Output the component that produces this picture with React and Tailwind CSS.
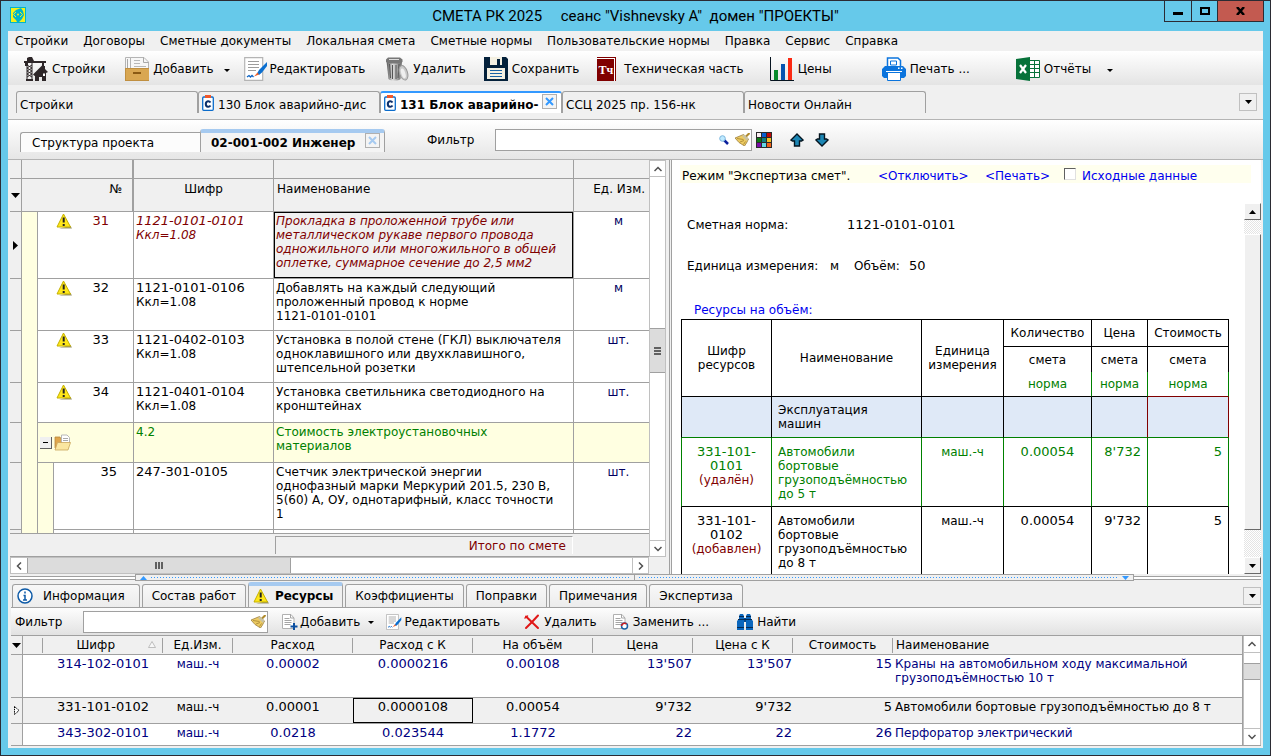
import React from 'react';

const menuItems = [
  'Стройки', 'Договоры', 'Сметные документы', 'Локальная смета', 'Сметные нормы',
  'Пользовательские нормы', 'Правка', 'Сервис', 'Справка',
];

const estimateRows = [
  { no: '31', code: '1121-0101-0101', k: 'Ккл=1.08', name: 'Прокладка в проложенной трубе или металлическом рукаве первого провода одножильного или многожильного в общей оплетке, суммарное сечение до 2,5 мм2', unit: 'м', height: 'h-[67px]', current: true },
  { no: '32', code: '1121-0101-0106', k: 'Ккл=1.08', name: 'Добавлять на каждый следующий проложенный провод к норме\n1121-0101-0101', unit: 'м', height: 'h-[52px]' },
  { no: '33', code: '1121-0402-0103', k: 'Ккл=1.08', name: 'Установка в полой стене (ГКЛ) выключателя одноклавишного или двухклавишного, штепсельной розетки', unit: 'шт.', height: 'h-[52px]' },
  { no: '34', code: '1121-0401-0104', k: 'Ккл=1.08', name: 'Установка светильника светодиодного на кронштейнах', unit: 'шт.', height: 'h-[40px]' },
];

const normRows = [
  { code: '331-101-0101', state: '(удалён)', name: 'Автомобили бортовые грузоподъёмностью до 5 т', unit: 'маш.-ч', amount: '0.00054', price: "8'732", cost: '5', tone: 'border-x-[#008000] text-[#008000]' },
  { code: '331-101-0102', state: '(добавлен)', name: 'Автомобили бортовые грузоподъёмностью до 8 т', unit: 'маш.-ч', amount: '0.00054', price: "9'732", cost: '5', tone: 'border-x-black text-black' },
];

const resourceRows = [
  { code: '314-102-0101', unit: 'маш.-ч', rate: '0.00002', rateK: '0.0000216', volume: '0.00108', price: "13'507", priceK: "13'507", cost: '15', name: 'Краны на автомобильном ходу максимальной\nгрузоподъёмностью 10 т', height: 'h-[43px]' },
  { code: '331-101-0102', unit: 'маш.-ч', rate: '0.00001', rateK: '0.0000108', volume: '0.00054', price: "9'732", priceK: "9'732", cost: '5', name: 'Автомобили бортовые грузоподъёмностью до 8 т', height: 'h-[26px]', current: true },
  { code: '343-302-0101', unit: 'маш.-ч', rate: '0.0218', rateK: '0.023544', volume: '1.1772', price: '22', priceK: '22', cost: '26', name: 'Перфоратор электрический', height: 'h-[21px]' },
];

/* icons */

const AppIcon = () => (
  <svg width="16" height="16" viewBox="0 0 16 16">
    <rect width="16" height="16" fill="#00b4cc" />
    <path d="M1 1h10L6 3 3 6v4l3 3 1 2H1z" fill="#f4f01a" />
    <path d="M15 15H9l3-3 2-4-1-4-2-3h4z" fill="#f4f01a" />
    <path d="M6 5 3.500 7.500 6 10M10 5l2.500 2.500L10 10" fill="none" stroke="#f4f01a" />
    <circle cx="8" cy="7.500" r="1" fill="#f4f01a" />
  </svg>
);

const CraneIcon = () => (
  <svg width="24" height="24" viewBox="0 0 24 24" fill="#2d2628">
    <path d="M0 4h22v2H0zM3 1l2-1h3l2 4H3zM18 6h2v3h-2zM1 6h3v3H1z" />
    <path d="M3 5v18M8 5v18M3 8l5 3-5 3 5 3-5 3M8 8l-5 3 5 3-5 3 5 3" fill="none" stroke="#2d2628" />
    <path d="M2 22h7v2H2zM18 8.500l-9 9 1.500 1.500.5-.5V24h4v-4h3v4h4v-8l2-1-3-3V9h-2z" />
    <path d="M19 16.500h2V19h-2z" fill="#fff" />
  </svg>
);

const DrawerIcon = () => (
  <svg width="24" height="24" viewBox="0 0 24 24">
    <path d="M.5 12V.5h5V12M5.500 12V.5H19L23.500 5v7" fill="#f7f7f7" stroke="#b4b4b4" />
    <path d="M2.500 2v9M18.500.5v5h5" fill="none" stroke="#a8a8a8" />
    <path d="M9 3.500h6M9 6.500h6M9 9.500h12" stroke="#b8b8b8" />
    <rect y="11" width="24" height="13" fill="#d9a752" />
    <path d="M0 11.500h24M.5 11v13M0 23.500h24" stroke="#c08f40" fill="none" />
    <rect x="8" y="15" width="8" height="2" fill="#8a5a14" />
  </svg>
);

const EditIcon = ({ size = 24 }) => (
  <svg width={size} height={size} viewBox="0 0 24 24">
    <path d="M.7.700h18v22.600H.7z" fill="#fff" stroke="#b4b4b4" strokeWidth="1.200" />
    <path d="M4 4.500h11M4 7.500h11M4 10.500h11M4 13.500h8" stroke="#9c9c9c" strokeWidth="1.200" />
    <path d="m3 20 2-1.500L6.500 20 8 18.500 9.500 20" fill="none" stroke="#0b63c4" strokeWidth="1.300" />
    <path d="m23 5-8 8-2 3.500 2 1.500 3-2.500L23 9z" fill="#0b6fd0" />
    <path d="m13.500 15.500-3.500 4 5-2z" fill="#f0602a" />
  </svg>
);

const BinIcon = () => (
  <svg width="24" height="24" viewBox="0 0 24 24">
    <defs>
      <linearGradient id="bin" x1="0" x2="1">
        <stop offset="0" stopColor="#555" />
        <stop offset=".4" stopColor="#ddd" />
        <stop offset="1" stopColor="#666" />
      </linearGradient>
    </defs>
    <path d="M1.500 4h15.500l-1.500 18c-2 2-10 2-12 0z" fill="url(#bin)" />
    <path d="M4.500 7l1 14M7.500 8v14M11 8v14M14 7l-1 14" stroke="#555" />
    <path d="M1 2.500 3 .5h12l2.500 2V5L14 6.500H4L1 5z" fill="#777" />
    <path d="M4 2.500h10" stroke="#ddd" />
    <ellipse cx="18.500" cy="16" rx="4" ry="7.500" fill="#c9c9c9" stroke="#999" transform="rotate(-18 18 16)" />
    <ellipse cx="18.500" cy="16.500" rx="2" ry="5" fill="#efefef" transform="rotate(-18 18 17)" />
  </svg>
);

const SaveIcon = () => (
  <svg width="24" height="24" viewBox="0 0 24 24">
    <path d="M0 0h22l2 2v22H0z" fill="#04213b" />
    <path d="M6 0h12v8H6z" fill="#f4f0e2" />
    <path d="M13 2h3v6h-3z" fill="#04213b" />
    <path d="M3 11h18v11H3z" fill="#f4f0e2" />
    <path d="M6 13.500h12M6 16.500h12M6 19.500h12" stroke="#1961a4" />
  </svg>
);

const TechIcon = () => (
  <span className="flex h-6 w-[19px] border-t border-r border-[#800000] bg-white">
    <span className="mt-px mr-px flex flex-1 items-center justify-center bg-[#800000] font-['Liberation_Serif',serif] text-[12px] font-bold text-white">Тч</span>
  </span>
);

const ChartIcon = () => (
  <svg width="24" height="24" viewBox="0 0 24 24">
    <path d="M.5 0v23.500H24" fill="none" stroke="#06131f" />
    <rect x="4" y="13" width="4" height="10" fill="#078a2a" />
    <rect x="11" y="7" width="4" height="16" fill="#0453b0" />
    <rect x="18" y="1" width="4" height="22" fill="#fb2a13" />
  </svg>
);

const PrintIcon = () => (
  <svg width="24" height="24" viewBox="0 0 24 24">
    <path d="M5.500 10V1H16l2.500 2.500V10" fill="#fff" stroke="#0b74dd" strokeWidth="1.500" />
    <path d="M8.500 8V4h6v4z" fill="#fff" stroke="#0b74dd" />
    <path d="M3 9h18l3 3v7l-2 2h-3v-5H5v5H2l-2-2v-7z" fill="#0b74dd" />
    <path d="M5.500 15.500h13v8h-13z" fill="#fff" stroke="#0b74dd" />
    <path d="M4 14.500h16" stroke="#fff" />
    <path d="M16 10.500h1.500V12H16zM19 10.500h1.500V12H19z" fill="#fff" />
  </svg>
);

const ExcelIcon = () => (
  <svg width="24" height="24" viewBox="0 0 24 24">
    <path d="M13 3.500h10.500v17H13M13 7.500h10M13 11.500h10M13 15.500h10M18.500 3v17" fill="#fff" stroke="#07723a" />
    <path d="M0 2 14 0v24L0 22z" fill="#07723a" />
    <path d="m4 8 6 8M10 8l-6 8" stroke="#fff" strokeWidth="2.200" />
  </svg>
);

const ClipIcon = () => (
  <svg width="12" height="16" viewBox="0 0 12 16">
    <rect x=".7" y="2" width="10.600" height="13.300" rx="1" fill="#fff" stroke="#0b6ccb" strokeWidth="1.300" />
    <path d="M3 0h6v3H3z" fill="#f0582a" />
    <path d="M8.500 7.500Q7.500 6 6 6.200 3.800 6.500 3.800 9T6 11.800q1.500.2 2.500-1.300" fill="none" stroke="#0b2f6b" strokeWidth="2" />
  </svg>
);

const LensIcon = () => (
  <svg width="10" height="10" viewBox="0 0 10 10">
    <path d="m5 5 4 4" stroke="#0a1f9c" strokeWidth="2.500" />
    <circle cx="3.500" cy="3.500" r="2.800" fill="#bfeaff" stroke="#7db6dc" />
  </svg>
);

const BroomIcon = () => (
  <svg width="15" height="13" viewBox="0 0 15 13">
    <path d="m14.500 0-4 4" stroke="#b08a2c" strokeWidth="2" />
    <path d="m8.500 1.500 5 4.500-2 4-2 3L4 9.500 0 5z" fill="#edcb62" stroke="#8f7130" strokeWidth=".7" />
    <path d="m9 1.500 4.500 4-1.500 2.500L7 3z" fill="#c9c2a0" />
    <path d="m2 5.500 6.500 1M5 9l4-1.500M8.500 11.500l2-3" stroke="#9b7a2b" strokeWidth=".7" />
  </svg>
);

const PaletteIcon = () => (
  <svg width="16" height="16" viewBox="0 0 16 16">
    <rect width="16" height="16" fill="#2b2b2b" />
    <path d="M1 1h4v4H1z" fill="#fbeef2" /><path d="M6 1h4v4H6z" fill="#0a5fd0" /><path d="M11 1h4v4h-4z" fill="#c00808" />
    <path d="M1 6h4v4H1z" fill="#0c7a12" /><path d="M6 6h4v4H6z" fill="#108080" /><path d="M11 6h4v4h-4z" fill="#f2c42a" />
    <path d="M1 11h4v4H1z" fill="#7a0ba8" /><path d="M6 11h4v4H6z" fill="#64d8e8" /><path d="M11 11h4v4h-4z" fill="#f06018" />
  </svg>
);

const ArrowIcon = ({ down }) => (
  <svg width="14" height="14" viewBox="0 0 14 14" className={down ? 'rotate-180' : ''}>
    <path d="m7 1 6 6-1.500 1H9.500v5h-5V8h-2L1 7z" fill="#1c86b4" stroke="#04141f" strokeWidth="1.400" />
  </svg>
);

const WarningIcon = () => (
  <svg width="16" height="16" viewBox="0 0 16 16">
    <path d="M3 15.500h13L14.500 13" fill="#9a9468" />
    <path d="M7.500 1 1 14h13.500z" fill="#ffe71a" stroke="#c4b000" strokeLinejoin="round" />
    <path d="M7.700 4.500v5M7.700 11v2" stroke="#222" strokeWidth="2" />
  </svg>
);

const FolderIcon = () => (
  <svg width="17" height="17" viewBox="0 0 17 17">
    <path d="M1 3h5l1 2h7v9H1z" fill="#e0a64c" stroke="#b8893c" strokeWidth=".8" />
    <path d="M7.500 10V1H13l2.500 2.500V10z" fill="#fff" stroke="#b8b8b8" />
    <path d="M9 4.500h5M9 6.500h5" stroke="#aaa" />
    <path d="M3.500 8.500h13L14 16H1z" fill="#fbe6a0" stroke="#c9a45c" strokeWidth=".8" />
  </svg>
);

const InfoIcon = () => (
  <svg width="16" height="16" viewBox="0 0 16 16">
    <circle cx="8" cy="8" r="7" fill="#fff" stroke="#0d5aa7" strokeWidth="1.500" />
    <path d="M8 3.500v2M6.500 7.500H8V12M6 12h4" fill="none" stroke="#0d5aa7" strokeWidth="1.500" />
  </svg>
);

const PageIcon = ({ children }) => (
  <svg width="16" height="16" viewBox="0 0 16 16">
    <path d="M.5.500H9L12 4v10.500H.5z" fill="#fff" stroke="#b0b0b0" />
    <path d="M8.500.500V4H12M2.500 4.500h5M2.500 6.500h7M2.500 8.500h7M2.500 10.500h6" fill="none" stroke="#a5a5a5" />
    {children}
  </svg>
);

const CrossIcon = () => (
  <svg width="16" height="16" viewBox="0 0 16 16" fill="none" stroke="#e01818" strokeLinecap="round">
    <path d="M2 2.500 14 14" strokeWidth="2" />
    <path d="M14 1.500 8 8l-6 6" strokeWidth="2" />
    <path d="M1 4l2.500-2" strokeWidth="1.500" />
  </svg>
);

const BinocularsIcon = () => (
  <svg width="16" height="16" viewBox="0 0 16 16">
    <path d="M2 2 3 0h3l1 2v2h2V2l1-2h3l1 2v3l2 2v9H9V8H7v8H0V7l2-2z" fill="#0a66bd" />
    <path d="M2 2.500h5M9 2.500h5M1 5.500h14M8 4v4M0 13.500h7M9 13.500h7" stroke="#052a52" />
  </svg>
);

const Caret = () => (
  <svg width="6" height="3" viewBox="0 0 6 3"><path d="M0 0h6L3 3z" /></svg>
);

const BigCaret = () => (
  <svg width="9" height="5" viewBox="0 0 9 5" className="ml-px"><path d="M0 0h9L4.500 5z" /></svg>
);

const Chevron = ({ dir }) => (
  <svg width="8" height="8" viewBox="0 0 8 8" className={dir}>
    <path d="M.5 6 4 2.500 7.500 6" fill="none" stroke="#505050" strokeWidth="1.500" />
  </svg>
);

/* shared parts */

const ToolButton = ({ icon, label, caret, gap = 'gap-1', className = '' }) => (
  <button type="button" className={`flex shrink-0 items-center whitespace-nowrap ${gap} ${className}`}>
    {icon}
    <span>{label}</span>
    {caret && <span className={`flex pt-0.5 ${caret}`}><Caret /></span>}
  </button>
);

const CloseTab = ({ color }) => (
  <button type="button" aria-label="Закрыть вкладку" className={`mb-1 flex size-[15px] shrink-0 items-center justify-center border border-[#b0b0b0] bg-[#f4f4f4] ${color}`}>
    <svg width="9" height="9" viewBox="0 0 9 9"><path d="m1 1 7 7M8 1 1 8" stroke="currentColor" strokeWidth="2" /></svg>
  </button>
);

const MainTab = ({ label, icon, active }) => (
  <div
    className={`flex h-[22px] w-[182px] items-center gap-1 rounded-t-[3px] border border-b-0 border-[#a0a0a0] pl-[3px] ${active ? 'border-t-2 border-t-[#3399ff] bg-white pr-1 font-bold' : 'bg-[#f0f0f0] pr-0.5'}`}
  >
    {icon}
    <button type="button" role="tab" aria-selected={!!active} className="min-w-0 flex-1 pt-1 text-left whitespace-nowrap">{label}</button>
    {active && <CloseTab color="text-[#3399ff]" />}
  </div>
);

const BottomTab = ({ label, icon, active }) => (
  <button
    type="button"
    role="tab"
    aria-selected={!!active}
    className={`flex items-center rounded-t-[3px] border border-b-0 border-[#a0a0a0] whitespace-nowrap ${active ? 'h-[25px] gap-1.5 border-t-4 border-t-[#a6caf0] bg-[#f0f0f0] pr-[9px] pb-0.5 pl-1 font-bold' : 'h-[23px] bg-linear-to-b from-[#f8f8f8] to-[#ececec]'} ${icon && !active ? 'gap-2.5 pr-3.5 pl-1' : ''} ${icon ? '' : 'px-[9px]'}`}
  >
    {icon}
    {label}
  </button>
);

const MenuSquare = () => (
  <button type="button" aria-label="Список вкладок" className="flex size-[18px] items-center justify-center border border-[#c0c0c0] bg-[#f0f0f0]">
    <svg width="7" height="4" viewBox="0 0 7 4"><path d="M0 0h7L3.500 4z" /></svg>
  </button>
);

/* panels */

function TitleBar() {
  return (
    <header className="grid h-[30px] grid-cols-[1fr_auto_1fr] items-start">
      <div className="pt-1.5 pl-[9px]"><AppIcon /></div>
      <h1 className="pt-[3px] font-['Roboto',sans-serif] text-[15px] leading-6 whitespace-pre">{'СМЕТА РК 2025     сеанс "Vishnevsky A"  домен "ПРОЕКТЫ"'}</h1>
      <div className="mr-1.5 flex h-[21px] justify-self-end border border-t-0 border-[#2b2b33]">
        <button type="button" aria-label="Свернуть" className="flex w-[27px] items-center justify-center border-r border-[#2b2b33]"><span className="mt-1 h-[3px] w-2.5 bg-black" /></button>
        <button type="button" aria-label="Развернуть" className="flex w-[26px] items-center justify-center border-r border-[#2b2b33]"><span className="h-2 w-2.5 border-2 border-black" /></button>
        <button type="button" aria-label="Закрыть" className="flex w-[45px] items-center justify-center bg-[#c35a50]">
          <svg width="9" height="8" viewBox="0 0 9 8"><path d="m1 0 7 8M8 0 1 8" stroke="#000" strokeWidth="2.500" /></svg>
        </button>
      </div>
    </header>
  );
}

function MainToolbar() {
  return (
    <div className="flex h-[34px] items-center gap-[18px] overflow-hidden bg-linear-to-b from-white to-[#e4e4e4] pt-0.5 pl-4">
      <ToolButton icon={<CraneIcon />} label="Стройки" />
      <ToolButton icon={<DrawerIcon />} label="Добавить" caret="ml-1.5" className="ml-0.5" />
      <ToolButton icon={<EditIcon />} label="Редактировать" gap="gap-0.5" className="-ml-1" />
      <ToolButton icon={<BinIcon />} label="Удалить" className="ml-0.5" />
      <ToolButton icon={<SaveIcon />} label="Сохранить" />
      <ToolButton icon={<TechIcon />} label="Техническая часть" gap="gap-2" />
      <ToolButton icon={<ChartIcon />} label="Цены" className="ml-2" />
      <ToolButton icon={<PrintIcon />} label="Печать ..." className="ml-8" />
      <ToolButton icon={<ExcelIcon />} label="Отчёты" className="ml-7" caret="ml-3" />
    </div>
  );
}

function SubToolbar() {
  return (
    <div className="flex h-[41px] items-center border-y border-[#b4b4b4] bg-linear-to-b from-white to-[#e6e6e6] pl-3">
      <div role="tablist" className="flex items-end self-end pb-[7px]">
        <button type="button" role="tab" aria-selected="false" className="h-5 w-[180px] rounded-tl-[3px] border border-r-0 border-b-0 border-[#a0a0a0] bg-[#fcfcfc] pl-[11px] text-left">Структура проекта</button>
        <div className="flex h-[23px] w-[185px] items-center rounded-t-[3px] border border-t-4 border-b-0 border-[#a0a0a0] border-t-[#a6caf0] bg-[#f4f4f4] pr-1 pl-2.5 font-bold">
          <button type="button" role="tab" aria-selected="true" className="min-w-0 flex-1 text-left whitespace-nowrap">02-001-002 Инженер</button>
          <CloseTab color="text-[#a6caf0]" />
        </div>
      </div>
      <label htmlFor="filter" className="ml-[42px] w-12">Фильтр</label>
      <div className="ml-5 flex h-[22px] w-[257px] items-center gap-1.5 border border-[#a0a0a0] bg-white pr-px">
        <input id="filter" className="h-full min-w-0 flex-1 px-1 outline-none" />
        <LensIcon />
        <BroomIcon />
      </div>
      <button type="button" aria-label="Цвета" className="ml-1"><PaletteIcon /></button>
      <button type="button" aria-label="Вверх" className="ml-[18px]"><ArrowIcon /></button>
      <button type="button" aria-label="Вниз" className="ml-[11px]"><ArrowIcon down /></button>
    </div>
  );
}

const cell = 'border-r border-b border-[#a0a0a0] pt-0.5 pl-0.5 align-top';
const gutter = 'border-r border-b border-[#a0a0a0] bg-[#f0f0f0] align-middle';

function EstimateGrid() {
  return (
    <div className="flex min-w-0 bg-[#f0f0f0] pr-[3px] pl-0.5">
      <div className="flex min-w-0 flex-1 flex-col">
        <div className="min-h-0 flex-1 overflow-hidden border-b border-[#a0a0a0] bg-white">
          <table className="w-full table-fixed border-separate border-spacing-0 leading-[14px]">
            <colgroup>
              <col className="w-3" />
              <col className="w-4" />
              <col className="w-4" />
              <col className="w-20" />
              <col className="w-[140px]" />
              <col />
              <col className="w-[75px]" />
            </colgroup>
            <thead className="bg-[#f0f0f0]">
              <tr className="h-[19px]">
                <td className={gutter} />
                <td colSpan="3" className="border-r-2 border-b border-[#a0a0a0]" />
                <td className={cell} />
                <td className={cell} />
                <td className="border-b border-[#a0a0a0]" />
              </tr>
              <tr className="h-[33px] text-center">
                <td className={gutter}><BigCaret /></td>
                <th colSpan="3" className="border-r-2 border-b border-[#a0a0a0] pt-[3px] pr-2.5 text-right align-top font-normal">№</th>
                <th className="border-r border-b border-[#a0a0a0] pt-[3px] align-top font-normal">Шифр</th>
                <th className="border-r border-b border-[#a0a0a0] pt-[3px] pl-[3px] text-left align-top font-normal">Наименование</th>
                <th className="border-b border-[#a0a0a0] pt-[3px] pr-1 text-right align-top font-normal">Ед. Изм.</th>
              </tr>
            </thead>
            <tbody>
              {estimateRows.map(row => (
                <tr key={row.no} className={`${row.height} ${row.current ? 'text-[#800000]' : ''}`}>
                  <td className={gutter}>
                    {row.current && <svg width="5" height="9" viewBox="0 0 5 9" className="ml-[3px]"><path d="M0 0v9l5-4.500z" /></svg>}
                  </td>
                  <td className="border-r border-[#a0a0a0] bg-[#ffffe1]" />
                  <td colSpan="2" className="border-r border-b border-[#a0a0a0] pt-px align-top">
                    <div className="flex justify-between pr-6 pl-[18px] text-[13px]">
                      <WarningIcon />
                      <span className="pt-px">{row.no}</span>
                    </div>
                  </td>
                  <td className={`${cell} ${row.current ? 'italic' : ''}`}>
                    <span className="block text-[13px] leading-[14px]">{row.code}</span>
                    {row.k}
                  </td>
                  <td className={`${cell} whitespace-pre-line ${row.current ? 'bg-[#f0f0f0] italic shadow-[inset_0_0_0_1px_#000]' : ''}`}>{row.name}</td>
                  <td className="border-b border-[#a0a0a0] pt-0.5 pl-3.5 text-center align-top text-[#000060]">{row.unit}</td>
                </tr>
              ))}
              <tr className="h-10 bg-[#ffffe1] text-[#008000]">
                <td className={gutter} />
                <td className="border-r border-[#a0a0a0]" />
                <td colSpan="2" className="border-r border-b border-[#a0a0a0]">
                  <div className="flex items-center gap-0.5 pl-0.5">
                    <button type="button" aria-label="Свернуть раздел" className="flex size-3 items-center justify-center border-r border-b border-[#606060] bg-[#f0f0f0]"><span className="h-px w-[5px] bg-black" /></button>
                    <FolderIcon />
                  </div>
                </td>
                <td className={`${cell} text-[12px]`}>4.2</td>
                <td className={cell}>Стоимость электроустановочных<br />материалов</td>
                <td className="border-b border-[#a0a0a0]" />
              </tr>
              <tr className="h-[67px]">
                <td className={gutter} />
                <td className="border-r border-[#a0a0a0] bg-[#ffffe1]" />
                <td className="border-r border-[#a0a0a0] bg-[#ffffe1]" />
                <td className="border-r border-b border-[#a0a0a0] pt-0.5 pr-4 text-right align-top text-[13px]">35</td>
                <td className={`${cell} text-[13px]`}>247-301-0105</td>
                <td className={cell}>Счетчик электрической энергии<br />однофазный марки Меркурий 201.5, 230 В,<br />5(60) А, ОУ, однотарифный, класс точности<br />1</td>
                <td className="border-b border-[#a0a0a0] pt-0.5 pl-3.5 text-center align-top text-[#000060]">шт.</td>
              </tr>
              <tr className="h-5">
                <td className={gutter} />
                <td className="border-r border-[#a0a0a0] bg-[#ffffe1]" />
                <td className="border-r border-[#a0a0a0] bg-[#ffffe1]" />
                <td className={cell} />
                <td className={cell} />
                <td className={cell} />
                <td className="border-b border-[#a0a0a0]" />
              </tr>
            </tbody>
          </table>
        </div>
        <div className="flex h-[23px] items-center border-b border-[#a0a0a0] pr-[76px] pl-[265px]">
          <div className="h-[18px] flex-1 border-t border-r border-l border-[#a0a0a0] border-r-white pr-1.5 text-right leading-[18px] text-[#800000]">Итого по смете</div>
        </div>
        <div className="flex h-[17px] border border-[#c0c0c0] bg-white">
          <span className="flex w-4 items-center justify-center"><Chevron dir="-rotate-90" /></span>
          <span className="flex w-[41.5%] items-center justify-center gap-px border-x border-[#a0a0a0] bg-[#dcdcdc]">
            <i className="h-[7px] w-0.5 bg-[#606060]" /><i className="h-[7px] w-0.5 bg-[#606060]" /><i className="h-[7px] w-0.5 bg-[#606060]" />
          </span>
          <span className="ml-auto flex w-4 items-center justify-center border-l border-[#c0c0c0]"><Chevron dir="rotate-90" /></span>
        </div>
      </div>
      <div className="mb-[17px] flex w-[17px] flex-col border border-[#c0c0c0] bg-white">
        <span className="flex h-4 items-center justify-center border-b border-[#c0c0c0]"><Chevron dir="rotate-0" /></span>
        <span className="flex-[151]" />
        <span className="flex h-[45px] flex-col items-center justify-center gap-px border-y border-[#a0a0a0] bg-[#dcdcdc]">
          <i className="h-0.5 w-[7px] bg-[#606060]" /><i className="h-0.5 w-[7px] bg-[#606060]" /><i className="h-0.5 w-[7px] bg-[#606060]" />
        </span>
        <span className="flex-[167]" />
        <span className="flex h-4 items-center justify-center border-t border-[#c0c0c0]"><Chevron dir="rotate-180" /></span>
      </div>
    </div>
  );
}

const headCell = 'border-r border-b border-black font-normal';
const subHead = 'border-r border-black font-normal';
const normCell = 'border-r border-b border-b-black pt-[7px]';
const track = 'bg-[repeating-conic-gradient(#e4e4e4_0_25%,#fff_0_50%)] bg-[length:2px_2px]';
const raised = 'border border-t-white border-r-[#696969] border-b-[#696969] border-l-white bg-[#f0f0f0]';

function ExpertPanel() {
  return (
    <div className="flex min-w-0 flex-col overflow-hidden bg-white pl-2">
      <div className="mt-[5px] mr-2.5 flex h-[18px] shrink-0 items-center bg-[#ffffee] pt-1 pl-0.5 whitespace-nowrap text-[#0000f0]">
        <span className="w-[196px] text-black">Режим "Экспертиза смет".</span>
        <a href="#off" className="w-[107px]">&lt;Отключить&gt;</a>
        <a href="#print" className="w-[79px]">&lt;Печать&gt;</a>
        <label className="flex items-center gap-1.5">
          <input type="checkbox" className="mb-1 size-3 appearance-none border border-[#e0e0e0] border-t-[#606060] border-l-[#606060] bg-white" />
          Исходные данные
        </label>
      </div>
      <div className="mt-5 flex min-h-0 flex-1">
        <div className="min-w-0 flex-1 overflow-hidden pr-4 leading-[14px]">
          <p className="mt-[15px] flex pl-[7px]"><span className="w-40">Сметная норма:</span><span className="text-[13px]">1121-0101-0101</span></p>
          <p className="mt-[27px] flex pl-[7px]"><span className="w-[143px]">Единица измерения:</span><span className="w-6">м</span><span className="w-[55px]">Объём:</span><span className="text-[13px]">50</span></p>
          <p className="mt-[30px] pl-3.5 text-[#0000f0]">Ресурсы на объём:</p>
          <table className="mt-0.5 ml-px w-full table-fixed border-separate border-spacing-0">
            <colgroup>
              <col className="w-[91px]" />
              <col />
              <col className="w-[82px]" />
              <col className="w-[88px]" />
              <col className="w-14" />
              <col className="w-[81px]" />
            </colgroup>
            <thead>
              <tr className="h-7 *:border-t">
                <th rowSpan="3" className={`${headCell} border-l`}>Шифр ресурсов</th>
                <th rowSpan="3" className={headCell}>Наименование</th>
                <th rowSpan="3" className={headCell}>Единица измерения</th>
                <th className={headCell}>Количество</th>
                <th className={headCell}>Цена</th>
                <th className={headCell}>Стоимость</th>
              </tr>
              <tr className="h-[25px]">
                <th className={subHead}>смета</th>
                <th className={subHead}>смета</th>
                <th className={subHead}>смета</th>
              </tr>
              <tr className="h-[25px] text-[#008000]">
                <th className="border-r border-b border-r-[#008000] border-b-black font-normal">норма</th>
                <th className="border-r border-b border-r-[#008000] border-b-black font-normal">норма</th>
                <th className="border-r border-b border-r-[#008000] border-b-[#800000] font-normal">норма</th>
              </tr>
            </thead>
            <tbody>
              <tr className="h-[41px] bg-[#dfe9f7]">
                <td className="border-r border-b border-l border-r-black border-b-[#008000] border-l-black" />
                <td className="border-r border-b border-r-black border-b-[#008000] pl-1.5">Эксплуатация<br />машин</td>
                <td className="border-r border-b border-r-black border-b-[#008000]" />
                <td className="border-r border-b border-r-black border-b-[#008000]" />
                <td className="border-r border-b border-r-[#800000] border-b-[#008000]" />
                <td className="border-r border-b border-r-[#800000] border-b-[#008000]" />
              </tr>
              {normRows.map(row => (
                <tr key={row.code} className="h-[69px] align-top">
                  <td className={`${normCell} ${row.tone} border-l text-center`}>
                    <span className="block text-[13px] leading-[14px]">{row.code.slice(0, 8)}<br />{row.code.slice(8)}</span>
                    <span className="text-[#800000]">{row.state}</span>
                  </td>
                  <td className={`${normCell} ${row.tone} px-1.5`}>{row.name}</td>
                  <td className={`${normCell} ${row.tone} text-center`}>{row.unit}</td>
                  <td className={`${normCell} ${row.tone} text-center text-[13px]`}>{row.amount}</td>
                  <td className={`${normCell} ${row.tone} pr-1.5 text-right text-[13px]`}>{row.price}</td>
                  <td className={`${normCell} ${row.tone} pr-1.5 text-right text-[13px]`}>{row.cost}</td>
                </tr>
              ))}
            </tbody>
          </table>
        </div>
        <div className={`flex w-[17px] shrink-0 flex-col ${track}`}>
          <span className={`flex h-[17px] items-center justify-center ${raised}`}><svg width="7" height="4" viewBox="0 0 7 4"><path d="M0 4h7L3.500 0z" /></svg></span>
          <span className="flex-[14]" />
          <span className={`flex-[296] ${raised}`} />
          <span className="flex-[27]" />
          <span className={`flex h-[17px] items-center justify-center ${raised}`}><svg width="7" height="4" viewBox="0 0 7 4"><path d="M0 0h7L3.500 4z" /></svg></span>
        </div>
      </div>
    </div>
  );
}

const dots = 'h-px flex-1 bg-[repeating-linear-gradient(90deg,#3399ff_0_1px,transparent_1px_3px)]';

function Splitter() {
  return (
    <div className="mr-0.5 ml-0.5 flex h-[7px] items-center bg-[#f0f0f0]">
      <span className="h-1 w-[125px] border-y border-[#a0a0a0] bg-white" />
      <span className="flex h-[7px] flex-1 items-center gap-1 border border-[#a0a0a0] px-1">
        <svg width="7" height="4" viewBox="0 0 7 4"><path d="M0 4h7L3.500 0z" fill="#3399ff" /></svg>
        <span className={dots} />
        <span className="h-[5px] w-px bg-[#a0a0a0]" />
        <span className={dots} />
        <svg width="7" height="4" viewBox="0 0 7 4"><path d="M0 0h7L3.500 4z" fill="#3399ff" /></svg>
      </span>
      <span className="h-1 w-[127px] border-y border-[#a0a0a0] bg-white" />
    </div>
  );
}

function ResourceToolbar() {
  return (
    <div className="flex h-[29px] items-center border-y border-[#a0a0a0] bg-linear-to-b from-[#fdfdfd] to-[#e2e2e2] pl-1">
      <label htmlFor="resource-filter" className="w-12">Фильтр</label>
      <div className="ml-5 flex h-[22px] w-[185px] items-center border border-[#a0a0a0] bg-white pr-px">
        <input id="resource-filter" className="h-full min-w-0 flex-1 px-1 outline-none" />
        <BroomIcon />
      </div>
      <div className="ml-3.5 flex items-center gap-4">
        <ToolButton icon={<PageIcon><path d="M12 9v7M8.500 12.500h7" stroke="#0b4fa0" strokeWidth="2" /></PageIcon>} label="Добавить" gap="gap-0.5" caret="ml-1.5" />
        <ToolButton icon={<EditIcon size={16} />} label="Редактировать" gap="gap-0.5" className="-ml-1" />
        <ToolButton icon={<CrossIcon />} label="Удалить" className="ml-2" />
        <ToolButton icon={<PageIcon><circle cx="11.500" cy="12" r="3" fill="#fff" stroke="#1961a4" strokeWidth="1.500" /><path d="M8.500 12a3 3 0 0 1 5-2" fill="none" stroke="#d02020" strokeWidth="1.500" /></PageIcon>} label="Заменить ..." />
        <ToolButton icon={<BinocularsIcon />} label="Найти" className="ml-3" />
      </div>
    </div>
  );
}

const Head = ({ children }) => (
  <th className="h-[19px] border-b border-[#a0a0a0] p-0 text-center font-normal">
    <span className="block h-[15px] border-r border-[#a0a0a0]">{children}</span>
  </th>
);

function ResourceGrid() {
  return (
    <div className="flex border-b border-[#a0a0a0]">
      <table className="min-w-0 flex-1 table-fixed border-separate border-spacing-0 border-r border-[#a0a0a0] leading-[14px]">
        <colgroup>
          <col className="w-3" />
          <col className="w-5" />
          <col className="w-[120px]" />
          <col className="w-[70px]" />
          <col className="w-[120px]" />
          <col className="w-[120px]" />
          <col className="w-[120px]" />
          <col className="w-[100px]" />
          <col className="w-[100px]" />
          <col className="w-[100px]" />
          <col />
        </colgroup>
        <thead className="bg-[#f0f0f0]">
          <tr>
            <td className={gutter}><BigCaret /></td>
            <Head />
            <Head>
              <span className="flex items-center justify-end gap-[33px] pr-1.5">
                Шифр
                <svg width="8" height="7" viewBox="0 0 8 7"><path d="M.5 6.500 4 .5l3.500 6z" fill="#f8f8f8" stroke="#b0b0b0" strokeWidth=".8" /></svg>
              </span>
            </Head>
            <Head>Ед.Изм.</Head>
            <Head>Расход</Head>
            <Head>Расход с К</Head>
            <Head>На объём</Head>
            <Head>Цена</Head>
            <Head>Цена с К</Head>
            <Head>Стоимость</Head>
            <th className="border-b border-[#a0a0a0] p-0 pl-[3px] text-left font-normal">Наименование</th>
          </tr>
        </thead>
        <tbody className="[&_td]:border-b [&_td]:border-[#a0a0a0] [&_td]:pt-0.5 [&_td]:align-top [&>tr:last-child>td]:border-b-0">
          {resourceRows.map(row => (
            <tr key={row.code} className={`text-center text-[13px] ${row.height} ${row.current ? 'bg-[#f0f0f0]' : 'bg-white text-[#000080]'}`}>
              <td className="border-r bg-[#f0f0f0]">
                {row.current && <svg width="6" height="9" viewBox="0 0 6 9" className="mt-1.5 ml-[3px]"><path d="M.5.500v8l4.500-4z" fill="#fff" stroke="#000" strokeDasharray="1.500 .8" /></svg>}
              </td>
              <td />
              <td>{row.code}</td>
              <td className="text-[12px]">{row.unit}</td>
              <td>{row.rate}</td>
              <td className={row.current ? 'shadow-[inset_0_0_0_1px_#000]' : ''}>{row.rateK}</td>
              <td>{row.volume}</td>
              <td className="pr-px text-right">{row.price}</td>
              <td className="pr-px text-right">{row.priceK}</td>
              <td className="pr-px text-right">{row.cost}</td>
              <td className="pl-0.5 text-left text-[12px] whitespace-pre-line">{row.name}</td>
            </tr>
          ))}
        </tbody>
      </table>
      <div className="flex w-[18px] flex-col border-x border-[#c0c0c0] bg-white">
        <span className="flex h-[17px] items-center justify-center border-b border-[#c0c0c0]"><Chevron dir="rotate-0" /></span>
        <span className="h-2.5" />
        <span className="h-[17px] border-y border-[#a0a0a0] bg-[#dcdcdc]" />
        <span className="flex-1" />
        <span className="flex h-[17px] items-center justify-center border-t border-[#c0c0c0]"><Chevron dir="rotate-180" /></span>
      </div>
    </div>
  );
}

export default function App() {
  return (
    <div className="flex h-screen flex-col border border-[#2b2b33] bg-[#66c9ea] font-['DejaVu_Sans',sans-serif] text-[12px] leading-4 text-black">
      <TitleBar />
      <main className="mx-[7px] mb-[7px] flex min-h-0 flex-1 flex-col bg-[#f0f0f0]">
        <nav className="flex h-5 shrink-0 items-center gap-[15px] pl-[7px] whitespace-nowrap">
          {menuItems.map(item => <button type="button" key={item}>{item}</button>)}
        </nav>
        <MainToolbar />
        <div className="flex h-[34px] items-center justify-between pr-1.5 pl-2">
          <div role="tablist" className="flex">
            <MainTab label="Стройки" />
            <MainTab icon={<ClipIcon />} label="130 Блок аварийно-дис" />
            <MainTab icon={<ClipIcon />} label="131 Блок аварийно-" active />
            <MainTab label="ССЦ 2025 пр. 156-нк" />
            <MainTab label="Новости Онлайн" />
          </div>
          <MenuSquare />
        </div>
        <SubToolbar />
        <section className="grid min-h-0 flex-1 grid-cols-[661fr_3px_589fr] grid-rows-[minmax(0,1fr)] pr-0.5">
          <EstimateGrid />
          <div className="border-x border-[#a0a0a0] bg-[#f0f0f0]" />
          <ExpertPanel />
        </section>
        <Splitter />
        <div className="flex h-[26px] items-end justify-between pr-0.5 pl-1">
          <div role="tablist" className="flex items-end gap-0.5">
            <BottomTab icon={<InfoIcon />} label="Информация" />
            <BottomTab label="Состав работ" />
            <BottomTab icon={<WarningIcon />} label="Ресурсы" active />
            <BottomTab label="Коэффициенты" />
            <BottomTab label="Поправки" />
            <BottomTab label="Примечания" />
            <BottomTab label="Экспертиза" />
          </div>
          <div className="mb-0.5"><MenuSquare /></div>
        </div>
        <section className="mr-0.5 mb-0.5 ml-[3px]">
          <ResourceToolbar />
          <ResourceGrid />
        </section>
      </main>
    </div>
  );
}
